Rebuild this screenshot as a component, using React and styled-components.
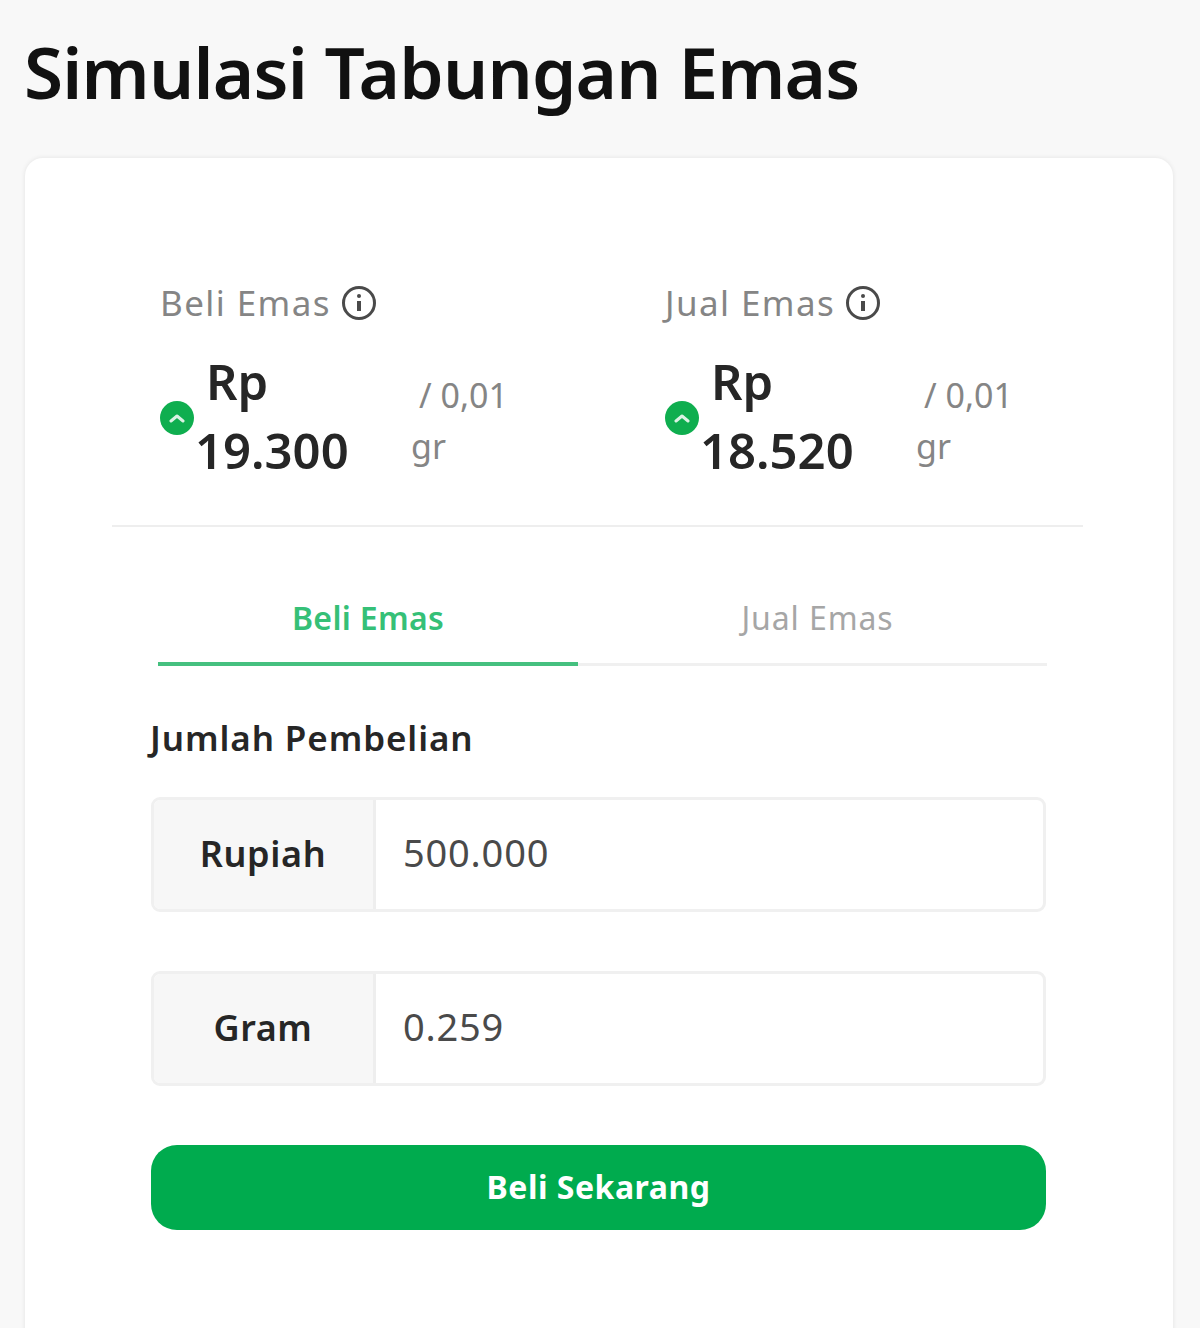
import React from "react";
import styled, { createGlobalStyle } from "styled-components";

const Global = createGlobalStyle`
  html, body { margin: 0; padding: 0; background: #f8f8f8; }
  body { font-family: "Noto Sans", "Lato", sans-serif; }
`;
const Page = styled.div`
  width: 1200px; height: 1328px; overflow: hidden; box-sizing: border-box;
  padding: 23px 27px 0 25px; background: #f8f8f8;
`;
const Title = styled.h1`
  margin: 0 0 37px -1px; font-size: 71px; line-height: 98px; font-weight: 600; color: #111;
  letter-spacing: -0.8px;
`;
const Card = styled.main`
  background: #fff; border-radius: 18px; height: 1200px;
  box-shadow: 0 0 5px rgba(0,0,0,.09); padding: 120px 90px 0 87px; box-sizing: border-box;
`;
const Stats = styled.section`
  display: grid; grid-template-columns: 505px 466px;
  padding: 0 0 37px 48px; border-bottom: 2px solid #eeeeee;
`;
const Stat = styled.div`display: flex; flex-direction: column;`;
const StatLabel = styled.div`
  display: flex; align-items: center; gap: 10px; color: #858585; font-size: 35px; line-height: 50px; letter-spacing: 1.4px;
`;
const PriceRow = styled.div`display: flex; align-items: center; margin-top: 19px;`;
const UpBadge = styled.span`
  width: 34px; height: 34px; border-radius: 50%; background: #0fae4f; color: #fff;
  display: flex; align-items: center; justify-content: center; flex: none; margin-right: 1px;
`;
const Price = styled.div`
  width: 216px; font-size: 49px; line-height: 69px; font-weight: 600; color: #262626;
  text-indent: 11px; padding-bottom: 3px;
`;
const Unit = styled.div`
  width: 130px; font-size: 34px; line-height: 51px; color: #858585; text-indent: 8px; margin-top: 6px;
`;
const Tabs = styled.div`
  display: flex; margin: 48px 0 0 46px; width: 889px; border-bottom: 3px solid #f0f0f0; height: 88px;
`;
const Tab = styled.div`
  flex: ${p => p.$active ? "0 0 420px" : "1"};
  height: ${p => p.$active ? "91px" : "88px"}; box-sizing: border-box; display: flex; align-items: center; justify-content: center;
  font-size: 32px; font-weight: ${p => p.$active ? 600 : 400};
  padding: ${p => p.$active ? "0 0 2px" : "0 0 4px 10px"};
  letter-spacing: ${p => p.$active ? "0.3px" : "0.9px"};
  color: ${p => p.$active ? "#35c077" : "#a6a6a6"};
  border-bottom: ${p => p.$active ? "4px solid #45c07f" : "none"};
`;
const Form = styled.section`
  margin: 0 0 0 39px; width: 895px; display: flex; flex-direction: column;
`;
const FormLabel = styled.h2`
  margin: 47px 0 34px -1px; font-size: 35px; line-height: 50px; font-weight: 600; color: #262626; letter-spacing: 0.9px;
`;
const Field = styled.div`
  display: flex; height: 115px; box-sizing: border-box; border: 3px solid #f0f0f0; border-radius: 9px;
  margin-bottom: 59px; overflow: hidden; background: #fff;
`;
const Addon = styled.div`
  width: 222px; flex: none; background: #f7f7f7; border-right: 3px solid #eeeeee; box-sizing: border-box;
  display: flex; align-items: center; justify-content: center; padding: 0 1px 3px 0;
  font-size: 36px; font-weight: 600; color: #262626; letter-spacing: 0.6px;
`;
const Value = styled.div`
  flex: 1; display: flex; align-items: center; padding: 0 0 5px 27px;
  font-size: 38px; color: #4a4a4a; letter-spacing: 0.8px;
`;
const Buy = styled.button`
  height: 85px; border: 0; border-radius: 26px; background: #00ab4e; color: #fff; padding: 0 0 3px;
  font: 700 32px "Noto Sans", sans-serif; letter-spacing: 0.5px;
`;

const Info = () => (
  <svg width="36" height="36" viewBox="0 0 36 36" fill="none" stroke="#4a4a4a" strokeWidth="3">
    <circle cx="18" cy="18" r="15.5" />
    <path d="M18 16v10" strokeWidth="4" />
    <circle cx="18" cy="11" r="2" fill="#4a4a4a" stroke="none" />
  </svg>
);
const Chevron = () => (
  <svg width="18" height="12" viewBox="0 0 18 12" fill="none" stroke="#fff" strokeWidth="3" strokeLinecap="round" strokeLinejoin="round" opacity=".85">
    <path d="M3 9l6-5 6 5" />
  </svg>
);

const StatBlock = ({ label, price }) => (
  <Stat>
    <StatLabel>{label}<Info /></StatLabel>
    <PriceRow>
      <UpBadge><Chevron /></UpBadge>
      <Price>Rp {price}</Price>
      <Unit>/ 0,01 gr</Unit>
    </PriceRow>
  </Stat>
);

export default function App() {
  return (
    <Page>
      <Global />
      <Title>Simulasi Tabungan Emas</Title>
      <Card>
        <Stats>
          <StatBlock label="Beli Emas" price="19.300" />
          <StatBlock label="Jual Emas" price="18.520" />
        </Stats>
        <Tabs>
          <Tab $active>Beli Emas</Tab>
          <Tab>Jual Emas</Tab>
        </Tabs>
        <Form>
          <FormLabel>Jumlah Pembelian</FormLabel>
          <Field><Addon>Rupiah</Addon><Value>500.000</Value></Field>
          <Field><Addon>Gram</Addon><Value>0.259</Value></Field>
          <Buy>Beli Sekarang</Buy>
        </Form>
      </Card>
    </Page>
  );
}
